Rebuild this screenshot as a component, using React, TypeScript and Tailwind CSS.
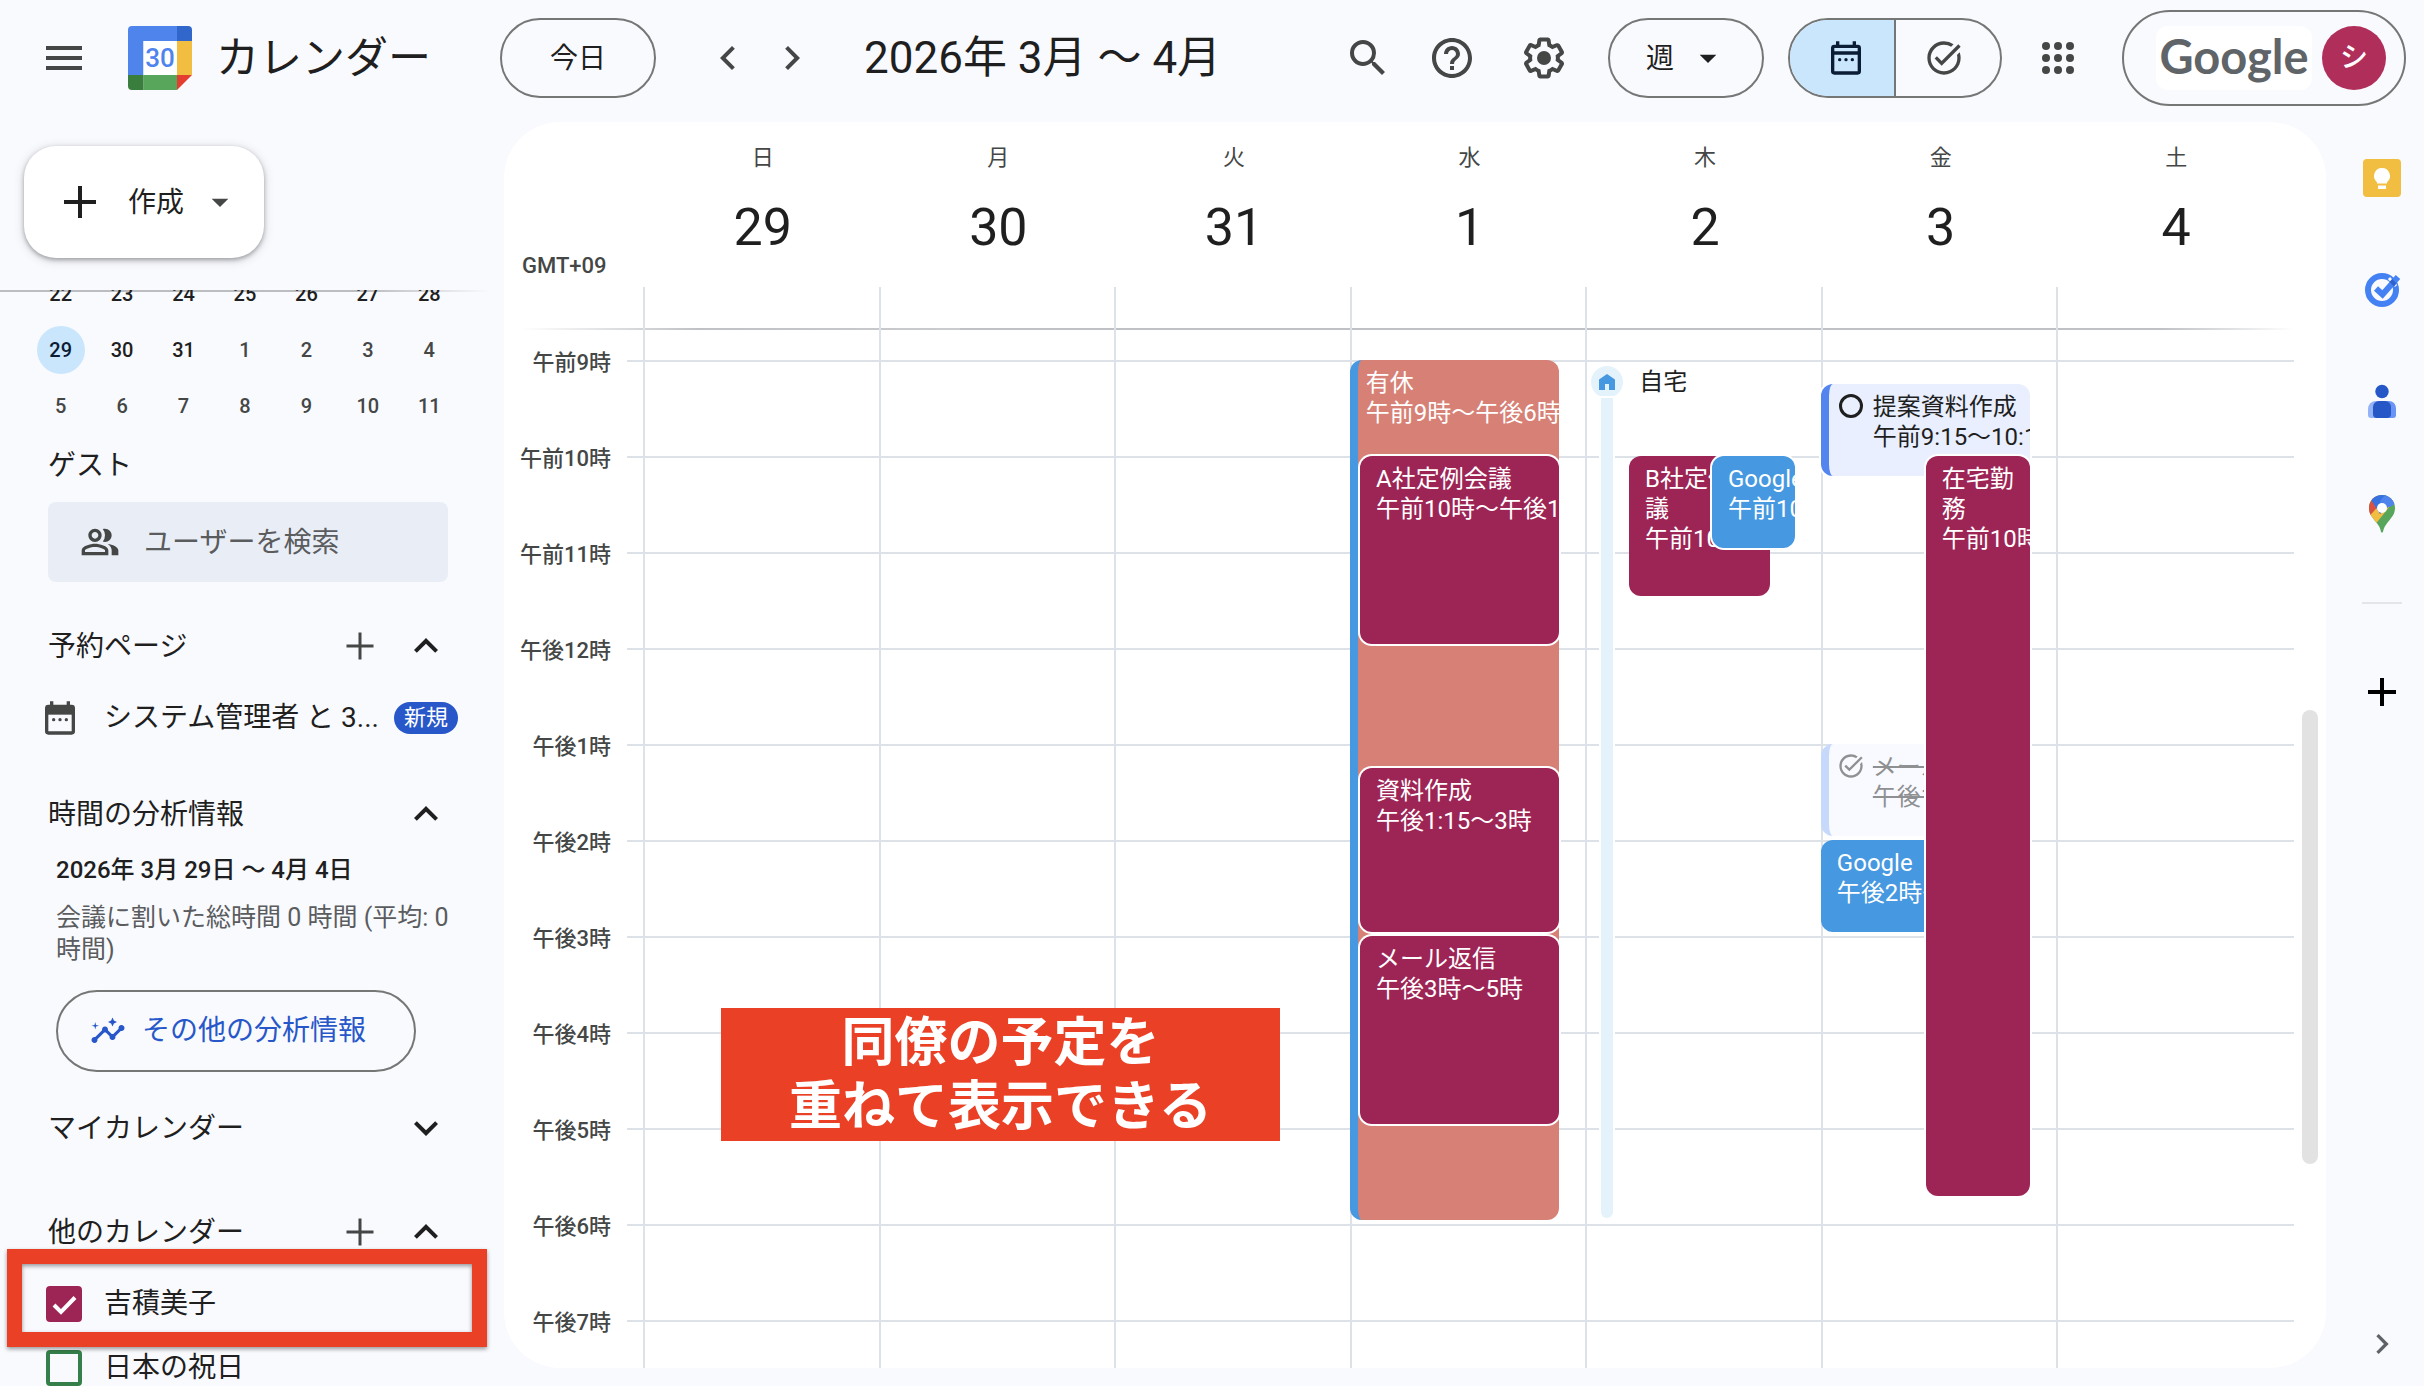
import type { ReactNode } from "react";
import {
  MdAdd,
  MdArrowDropDown,
  MdChevronLeft,
  MdChevronRight,
  MdExpandLess,
  MdExpandMore,
  MdHelpOutline,
  MdInsights,
  MdMenu,
  MdOutlinePeopleAlt,
  MdSearch,
  MdTaskAlt,
} from "react-icons/md";

const HOUR_HEIGHT = 96;
const FIRST_HOUR = 9;

const days = [
  { label: "日", date: 29 },
  { label: "月", date: 30 },
  { label: "火", date: 31 },
  { label: "水", date: 1 },
  { label: "木", date: 2 },
  { label: "金", date: 3 },
  { label: "土", date: 4 },
];

const hours = [
  "午前9時",
  "午前10時",
  "午前11時",
  "午後12時",
  "午後1時",
  "午後2時",
  "午後3時",
  "午後4時",
  "午後5時",
  "午後6時",
  "午後7時",
];

type Kind = "leave" | "berry" | "blue" | "task" | "done";

type CalEvent = {
  day: number;
  title: string;
  time: string;
  start: number;
  length: number;
  left: number;
  width: number;
  kind: Kind;
  ring?: boolean;
};

const events: CalEvent[] = [
  { day: 3, title: "有休", time: "午前9時～午後6時", start: 9, length: 9, left: 0, width: 88.7, kind: "leave" },
  { day: 3, title: "A社定例会議", time: "午前10時～午後12時", start: 10, length: 2, left: 4.4, width: 84.3, kind: "berry", ring: true },
  { day: 3, title: "資料作成", time: "午後1:15～3時", start: 13.25, length: 1.75, left: 4.4, width: 84.3, kind: "berry", ring: true },
  { day: 3, title: "メール返信", time: "午後3時～5時", start: 15, length: 2, left: 4.4, width: 84.3, kind: "berry", ring: true },
  { day: 4, title: "B社定例会議", time: "午前10時～11:30", start: 10, length: 1.5, left: 18.6, width: 60, kind: "berry" },
  { day: 4, title: "Google", time: "午前10時～11時", start: 10, length: 1, left: 53.8, width: 35.3, kind: "blue", ring: true },
  { day: 5, title: "提案資料作成", time: "午前9:15～10:15", start: 9.25, length: 1, left: 0, width: 88.7, kind: "task", ring: true },
  { day: 5, title: "メール返信", time: "午後1時～2時", start: 13, length: 1, left: 0, width: 60, kind: "done" },
  { day: 5, title: "Google", time: "午後2時～3時", start: 14, length: 1, left: 0, width: 60, kind: "blue" },
  { day: 5, title: "在宅勤務", time: "午前10時～午後5:45", start: 10, length: 7.75, left: 44.5, width: 44.2, kind: "berry", ring: true },
];

const kindClass: Record<Kind, string> = {
  leave: "bg-[#d78176] text-white border-l-8 border-[#4698e0] pl-2",
  berry: "bg-[#9d2556] text-white pl-4",
  blue: "bg-[#4698e0] text-white pl-4",
  task: "bg-[#e9effe] text-[#1f1f1f] border-l-8 border-[#5484ed] pl-2",
  done: "bg-[#f9faff] text-[#8e9092] border-l-8 border-[#c7d9fb] pl-2",
};

function EventBlock({ event }: { event: CalEvent }) {
  const isTask = event.kind === "task" || event.kind === "done";
  return (
    <article
      className={`absolute flex items-start gap-2 overflow-hidden rounded-xl pt-2 text-2xl leading-[30px] ${kindClass[event.kind]} ${event.ring ? "ring-2 ring-white" : ""}`}
      style={{
        top: (event.start - FIRST_HOUR) * HOUR_HEIGHT,
        height: event.length * HOUR_HEIGHT - 4,
        left: `${event.left}%`,
        width: `${event.width}%`,
      }}
    >
      {event.kind === "task" && (
        <svg viewBox="0 0 28 28" className="size-7 shrink-0" aria-hidden="true">
          <circle cx="14" cy="14" r="10.5" fill="none" stroke="currentColor" strokeWidth="3" />
        </svg>
      )}
      {event.kind === "done" && <MdTaskAlt className="size-7 shrink-0" aria-hidden="true" />}
      <div className={`min-w-0 ${isTask ? "whitespace-nowrap" : ""} ${event.kind === "done" ? "line-through" : ""}`}>
        <h3>{event.title}</h3>
        <p className="whitespace-nowrap">{event.time}</p>
      </div>
    </article>
  );
}

function CalendarLogo() {
  return (
    <svg viewBox="0 0 64 64" className="size-16 shrink-0" aria-hidden="true">
      <path d="M4 0h45v15H15.5v34H0V4a4 4 0 0 1 4-4z" fill="#5084ed" />
      <path d="M49 0h11a4 4 0 0 1 4 4v11H49z" fill="#3167ca" />
      <path d="M49 15h15v34H49z" fill="#f2be42" />
      <path d="M15.500 49H49v15H15.500z" fill="#58a55c" />
      <path d="M0 49h15.500v15H4a4 4 0 0 1-4-4z" fill="#3a7e3e" />
      <path d="M49 49h15L49 64z" fill="#e33e2f" />
      <path d="M15.500 15H49v34H15.500z" fill="#fff" />
      <text x="32" y="41" textAnchor="middle" fontSize="26" fontWeight="500" fill="#4f84ee">
        30
      </text>
    </svg>
  );
}

function GearIcon() {
  return (
    <svg viewBox="0 0 24 24" className="size-12" fill="currentColor" aria-hidden="true">
      <path d="M13.850 22.250h-3.700c-.74 0-1.360-.54-1.450-1.270l-.27-1.890c-.27-.14-.53-.29-.79-.46l-1.800.72c-.7.26-1.470-.03-1.810-.65L2.200 15.530c-.35-.66-.2-1.440.36-1.880l1.530-1.190c-.01-.15-.02-.3-.02-.46 0-.15.01-.31.02-.46l-1.520-1.190c-.59-.45-.74-1.260-.37-1.880l1.850-3.190c.34-.62 1.110-.9 1.790-.63l1.810.73c.26-.17.52-.32.78-.46l.27-1.910c.09-.7.71-1.250 1.440-1.250h3.700c.74 0 1.360.54 1.450 1.270l.27 1.890c.27.14.53.29.79.46l1.800-.72c.71-.26 1.480.03 1.820.65l1.840 3.180c.36.66.2 1.440-.36 1.880l-1.520 1.190c.01.15.02.3.02.46s-.01.31-.02.46l1.520 1.190c.56.45.72 1.230.37 1.860l-1.860 3.220c-.34.62-1.110.9-1.800.63l-1.800-.72c-.26.17-.52.32-.78.46l-.27 1.910c-.1.68-.72 1.220-1.460 1.220zm-3.230-2h2.760l.37-2.550.53-.22c.44-.18.88-.44 1.340-.78l.45-.34 2.380.96 1.380-2.400-2.030-1.580.07-.56c.03-.26.06-.51.06-.78s-.03-.53-.06-.78l-.07-.56 2.030-1.580-1.390-2.400-2.390.96-.45-.35c-.42-.32-.87-.58-1.330-.77l-.52-.22-.37-2.550h-2.760l-.37 2.550-.53.21c-.44.19-.88.44-1.340.79l-.45.33-2.380-.95-1.390 2.390 2.030 1.580-.07.56a7 7 0 0 0-.06.79c0 .26.02.53.06.78l.07.56-2.030 1.580 1.380 2.400 2.390-.96.45.35c.43.33.86.58 1.330.77l.53.22.38 2.550z" />
      <circle cx="12" cy="12" r="3.500" />
    </svg>
  );
}

function DayViewIcon({ filledHeader }: { filledHeader?: boolean }) {
  return (
    <svg viewBox="0 0 24 24" className="size-10 shrink-0" aria-hidden="true">
      <rect x="4" y="5" width="16" height="16" rx="1" fill="none" stroke="currentColor" strokeWidth="2" />
      <path d="M6 2h2v3H6zM16 2h2v3h-2z" fill="currentColor" />
      {filledHeader ? (
        <path d="M4 5h16v5H4z" fill="currentColor" />
      ) : (
        <path d="M4 8h16v2H4z" fill="currentColor" />
      )}
      <g fill="currentColor">
        <circle cx="8.200" cy="13" r="1" />
        <circle cx="12" cy="13" r="1" />
        <circle cx="15.800" cy="13" r="1" />
      </g>
    </svg>
  );
}

function AppsIcon() {
  return (
    <svg viewBox="0 0 24 24" className="size-12" fill="currentColor" aria-hidden="true">
      {[6, 12, 18].map((y) => [6, 12, 18].map((x) => <circle key={`${x}-${y}`} cx={x} cy={y} r="2" />))}
    </svg>
  );
}

function KeepIcon() {
  return (
    <svg viewBox="0 0 40 40" className="size-10" aria-hidden="true">
      <rect x="1" y="1" width="38" height="38" rx="4" fill="#f2be42" />
      <path d="M20 10a8 8 0 0 0-5 14.200V25.500h10v-1.300A8 8 0 0 0 20 10z" fill="#fff" />
      <path d="M16 27.500h8V31h-8z" fill="#fff" />
    </svg>
  );
}

function TasksIcon() {
  return (
    <svg viewBox="0 0 40 40" className="size-10" aria-hidden="true">
      <circle cx="20" cy="20" r="14" fill="none" stroke="#4482f4" strokeWidth="6" />
      <path d="M27 8l7 8" stroke="#f9fafe" strokeWidth="3" />
      <path d="M14 18.500l6.500 6L36 7" fill="none" stroke="#4482f4" strokeWidth="6" />
      <path d="M27.500 12l4.500 4.500 2.500-3-4.200-4.500z" fill="#2d62cf" />
    </svg>
  );
}

function ContactsIcon() {
  return (
    <svg viewBox="0 0 40 40" className="size-10" aria-hidden="true">
      <circle cx="20" cy="9.500" r="6.700" fill="#2557c6" />
      <path d="M14 19h13a7 7 0 0 1 7 7v7a3 3 0 0 1-3 3H14z" fill="#6b95f5" />
      <path d="M14 19h5v17H9a3 3 0 0 1-3-3v-6a8 8 0 0 1 8-8z" fill="#93b2f8" />
      <path d="M17 19h6a6 6 0 0 1 6 6v7a4 4 0 0 1-4 4H15a4 4 0 0 1-4-4v-7a6 6 0 0 1 6-6z" fill="#2557c6" />
    </svg>
  );
}

function MapsIcon() {
  return (
    <svg viewBox="0 0 40 40" className="size-10" aria-hidden="true">
      <defs>
        <clipPath id="pin">
          <path d="M20 1C12.500 1 7 6.800 7 14c0 7 4.500 10.500 8.500 16 2.500 3.500 3 5.500 3.400 7.500.3 1.500 1.900 1.500 2.200 0 .4-2 .9-4 3.400-7.500C28.500 24.500 33 21 33 14 33 6.800 27.500 1 20 1z" />
        </clipPath>
      </defs>
      <g clipPath="url(#pin)">
        <path d="M0 0h40v40H0z" fill="#58a55c" />
        <path d="M2 26L20 6l8 6L12 32z" fill="#f2be42" />
        <path d="M0 0h12l8 8-12 13.500L0 22z" fill="#d95140" />
        <path d="M8 4L20-2l12 10-14 12z" fill="#3871e0" />
        <path d="M24 0h12v8l-8 5-8-1-2-5z" fill="#5084ed" />
      </g>
      <circle cx="20" cy="14" r="5" fill="#fff" />
    </svg>
  );
}

function IconButton({ label, children, className = "" }: { label: string; children: ReactNode; className?: string }) {
  return (
    <button type="button" aria-label={label} className={`flex shrink-0 items-center justify-center ${className}`}>
      {children}
    </button>
  );
}

function Header() {
  return (
    <header className="mb-1.5 flex h-29 shrink-0 items-center pr-4.5 text-[#444746]">
      <div className="flex w-[500px] shrink-0 items-center pl-10">
        <IconButton label="メインメニュー" className="mr-10">
          <MdMenu className="size-12" />
        </IconButton>
        <a href="#calendar" className="flex items-center gap-6 text-[43px] leading-none text-[#1f1f1f]">
          <CalendarLogo />
          カレンダー
        </a>
      </div>
      <button
        type="button"
        className="h-20 w-39 shrink-0 rounded-full border-2 border-[#747775] pt-0.5 text-[28px] text-[#1f1f1f]"
      >
        今日
      </button>
      <div className="mx-12 flex gap-4">
        <IconButton label="前の週">
          <MdChevronLeft className="size-12" />
        </IconButton>
        <IconButton label="次の週">
          <MdChevronRight className="size-12" />
        </IconButton>
      </div>
      <h1 className="whitespace-nowrap text-[44px] leading-none text-[#1f1f1f]">2026年 3月 ～ 4月</h1>

      <div className="ml-auto flex items-center">
        <IconButton label="検索" className="mr-9">
          <MdSearch className="size-12" />
        </IconButton>
        <IconButton label="サポート" className="mr-11">
          <MdHelpOutline className="size-12" />
        </IconButton>
        <IconButton label="設定" className="mr-10">
          <GearIcon />
        </IconButton>
        <div className="relative mr-6 h-20 w-39 text-[#1f1f1f]">
          <select
            aria-label="表示形式"
            className="size-full appearance-none rounded-full border-2 border-[#747775] bg-transparent pl-9 pt-0.5 text-[28px]"
          >
            <option>週</option>
            <option>日</option>
            <option>月</option>
          </select>
          <MdArrowDropDown className="pointer-events-none absolute right-9 top-5 size-10" aria-hidden="true" />
        </div>
        <div className="mr-8 flex h-20 overflow-hidden rounded-full border-2 border-[#747775]">
          <IconButton
            label="カレンダーに切り替え"
            className="w-[106px] border-r-2 border-[#747775] bg-[#c9e6fd] pl-2 text-[#0b1d35]"
          >
            <DayViewIcon />
          </IconButton>
          <IconButton label="ToDo リストに切り替え" className="w-26 pr-2">
            <MdTaskAlt className="size-10" />
          </IconButton>
        </div>
        <IconButton label="Google アプリ" className="mr-10">
          <AppsIcon />
        </IconButton>
        <button
          type="button"
          aria-label="Google アカウント"
          className="flex h-24 w-71 items-center justify-end gap-2.5 rounded-full border-2 border-[#747775] pr-4.5"
        >
          <span className="flex h-16 w-39 items-center justify-center rounded-xl bg-white pb-1 font-[family-name:Lato] text-[47px] font-bold leading-none text-[#5f6469]">
            Google
          </span>
          <span className="flex size-16 items-center justify-center rounded-full bg-[#b02e5a] text-[28px] font-medium text-white">
            シ
          </span>
        </button>
      </div>
    </header>
  );
}

const miniWeeks = [
  [22, 23, 24, 25, 26, 27, 28],
  [29, 30, 31, 1, 2, 3, 4],
  [5, 6, 7, 8, 9, 10, 11],
];

function MiniCalendar() {
  return (
    <table className="-mt-6 ml-[30px] w-[430px] table-fixed text-center text-xl font-medium">
      <tbody>
        {miniWeeks.map((week, row) => (
          <tr key={row} className="h-14">
            {week.map((date, col) => {
              const current = row === 0 || (row === 1 && col < 3);
              const selected = row === 1 && col === 0;
              return (
                <td key={date} className="p-0">
                  <button
                    type="button"
                    className={`size-12 rounded-full align-middle ${selected ? "bg-[#c9e6fd] text-[#0b1d35]" : current ? "text-[#1f1f1f]" : "text-[#444746]"}`}
                  >
                    {date}
                  </button>
                </td>
              );
            })}
          </tr>
        ))}
      </tbody>
    </table>
  );
}

function SectionHeader({
  title,
  canAdd,
  open,
  className,
}: {
  title: string;
  canAdd?: boolean;
  open: boolean;
  className: string;
}) {
  return (
    <div className={`flex h-12 items-center pl-12 ${className}`}>
      <h2 className="flex-1 pt-0.5 text-[28px] leading-10">{title}</h2>
      {canAdd && (
        <IconButton label={`${title}を追加`} className="mr-11 text-[#444746]">
          <svg viewBox="0 0 28 28" className="size-7" aria-hidden="true">
            <path d="M14 0.500v27M0.500 14h27" stroke="currentColor" strokeWidth="3" />
          </svg>
        </IconButton>
      )}
      <IconButton label={open ? `${title}を閉じる` : `${title}を開く`} className="mr-[54px] -ml-4">
        {open ? <MdExpandLess className="size-12" /> : <MdExpandMore className="size-12" />}
      </IconButton>
    </div>
  );
}

function Sidebar() {
  return (
    <aside className="flex w-[504px] shrink-0 flex-col overflow-hidden pt-[24px]">
      <button
        type="button"
        className="ml-6 flex h-28 w-60 shrink-0 items-center rounded-[32px] bg-white pl-10 text-[28px] shadow-[0_2px_4px_rgba(60,64,67,0.4),0_2px_8px_2px_rgba(60,64,67,0.15)]"
      >
        <svg viewBox="0 0 32 32" className="mr-8 size-8" aria-hidden="true">
          <path d="M16 0v32M0 16h32" stroke="currentColor" strokeWidth="4" />
        </svg>
        <span className="pt-0.5">作成</span>
        <MdArrowDropDown className="ml-4 size-10 text-[#444746]" aria-hidden="true" />
      </button>
      <div className="mt-8 h-0.5 w-[490px] shrink-0 bg-linear-to-r from-[#bcbdc1] from-75% to-transparent" />

      <div className="-mt-0.5 flex min-h-0 flex-1 flex-col overflow-hidden">
        <MiniCalendar />
        <label htmlFor="guest-search" className="ml-12 mt-3 text-[28px] leading-10">
          ゲスト
        </label>
        <div className="ml-12 mt-4 flex h-20 w-100 shrink-0 items-center gap-6 rounded-lg bg-[#e9eef6] pl-8 text-[#444746]">
          <MdOutlinePeopleAlt className="size-10 shrink-0" aria-hidden="true" />
          <input
            id="guest-search"
            placeholder="ユーザーを検索"
            className="h-full min-w-0 flex-1 bg-transparent text-[28px] outline-none placeholder:text-[#5a5c5e]"
          />
        </div>

        <SectionHeader title="予約ページ" canAdd open className="mt-10" />
        <div className="mt-6 flex h-12 shrink-0 items-center pl-10">
          <span className="text-[#444746]">
            <DayViewIcon filledHeader />
          </span>
          <a href="#booking" className="ml-6 w-[290px] truncate text-[28px] leading-10">
            システム管理者 と 3...
          </a>
          <span className="flex h-8 w-16 items-center justify-center rounded-full bg-[#2757c9] text-[22px] leading-none text-white">
            新規
          </span>
        </div>

        <SectionHeader title="時間の分析情報" open className="mt-12" />
        <p className="ml-14 mt-4 text-2xl font-medium leading-8">2026年 3月 29日 ～ 4月 4日</p>
        <p className="ml-14 mt-4 w-100 text-[25px] leading-8 text-[#5a5c5e]">
          会議に割いた総時間 0 時間 (平均: 0 時間)
        </p>
        <button
          type="button"
          className="ml-14 mt-6 flex h-[82px] w-90 shrink-0 items-center gap-4 rounded-full border-2 border-[#747775] pl-8 text-[28px] text-[#2757c9]"
        >
          <MdInsights className="size-9" aria-hidden="true" />
          その他の分析情報
        </button>

        <SectionHeader title="マイカレンダー" open={false} className="mt-8" />
        <SectionHeader title="他のカレンダー" canAdd open className="mt-14" />
        <ul className="relative mt-[30px] flex flex-col gap-7 pl-[46px] text-[28px] leading-9">
          <li>
            <label className="flex items-center gap-[22px]">
              <span className="relative size-9">
                <input
                  type="checkbox"
                  defaultChecked
                  className="block size-9 appearance-none rounded border-4 border-[#9d2556] checked:bg-[#9d2556]"
                />
                <svg viewBox="0 0 36 36" className="pointer-events-none absolute inset-0 size-9" aria-hidden="true">
                  <path d="M8 19l7 7 14-14.500" fill="none" stroke="#fff" strokeWidth="4" />
                </svg>
              </span>
              吉積美子
            </label>
          </li>
          <li>
            <label className="flex items-center gap-[22px]">
              <input type="checkbox" className="block size-9 appearance-none rounded border-4 border-[#35804a]" />
              日本の祝日
            </label>
          </li>
          <li
            aria-hidden="true"
            className="pointer-events-none absolute -top-[37px] left-[7px] h-[98px] w-[480px] border-[15px] border-[#ea4025] drop-shadow-[0_2px_2px_rgba(0,0,0,0.4)]"
          />
        </ul>
      </div>
    </aside>
  );
}

function WorkingLocation() {
  return (
    <div className="absolute left-1.5 top-1.5 flex h-[852px] items-start gap-4">
      <div className="flex h-full w-8 flex-col items-center">
        <span className="flex size-8 shrink-0 items-center justify-center rounded-full bg-[#e4f3fb]">
          <svg viewBox="0 0 16 16" className="size-4" aria-hidden="true">
            <path d="M0 5.500L8 0l8 5.500V16h-6v-6H6v6H0z" fill="#4698e0" />
          </svg>
        </span>
        <span className="w-3 flex-1 rounded-b-full bg-[#e4f3fb] ring-2 ring-white" />
      </div>
      <span className="text-2xl leading-8">自宅</span>
    </div>
  );
}

function WeekGrid() {
  return (
    <main className="relative mb-4.5 flex min-w-0 flex-1 flex-col overflow-hidden rounded-[56px] bg-white">
      <div className="flex h-[206px] shrink-0 pr-[34px]">
        <div className="flex w-[139px] shrink-0 items-end pb-[46px] pl-4.5 text-[22px] font-medium leading-8 text-[#444746]">
          GMT+09
        </div>
        <div className="grid flex-1 grid-cols-7">
          {days.map((day) => (
            <div key={day.date} className="flex flex-col text-center">
              <span className="mt-5 pl-1 text-[22px] leading-8 text-[#444746]">{day.label}</span>
              <span className="mt-[22px] pl-1 text-[52px] leading-16">{day.date}</span>
              <span className="mt-auto h-[41px] border-l-2 border-[#dde1e8]" />
            </div>
          ))}
        </div>
      </div>

      <div className="relative min-h-0 flex-1 overflow-hidden pt-8">
        <div className="absolute left-4 right-8 top-0 h-0.5 bg-linear-to-r from-transparent via-[#bfc1c4] via-10% to-transparent" />
        <div className="absolute left-1/4 right-8 top-0 h-0.5 bg-linear-to-r from-[#bfc1c4] from-90% to-transparent" />
        {hours.map((hour) => (
          <div key={hour} className="flex h-24 pr-8">
            <span className="-mt-[13px] h-8 w-[107px] shrink-0 whitespace-nowrap text-right text-[22px] font-medium leading-8 text-[#444746]">
              {hour}
            </span>
            <span className="ml-4 flex-1 border-t-2 border-[#dde1e8]" />
          </div>
        ))}
        <div className="absolute bottom-0 left-[139px] right-[34px] top-0 grid grid-cols-7">
          {days.map((day, index) => (
            <section
              key={day.date}
              aria-label={`${day.label} ${day.date}`}
              className="relative pt-8 shadow-[inset_2px_0_0_#dde1e8]"
            >
              <div className="relative">
                {index === 4 && <WorkingLocation />}
                {events
                  .filter((event) => event.day === index)
                  .map((event) => (
                    <EventBlock key={`${event.title}-${event.start}`} event={event} />
                  ))}
              </div>
            </section>
          ))}
        </div>
      </div>

      <div className="absolute right-2 top-[588px] h-[454px] w-4 rounded-full bg-[#e2e2e2]" />
      <p className="absolute left-[217px] top-[886px] flex h-[133px] w-[559px] flex-col justify-center bg-[#ea4025] text-center text-[53px] font-bold leading-16 text-white">
        <span>同僚の予定を</span>
        <span>重ねて表示できる</span>
      </p>
    </main>
  );
}

function SidePanel() {
  return (
    <nav aria-label="サイドパネル" className="flex w-[98px] shrink-0 flex-col items-center pl-3.5 pt-9">
      <div className="flex flex-col gap-18">
        <IconButton label="Keep">
          <KeepIcon />
        </IconButton>
        <IconButton label="ToDo リスト">
          <TasksIcon />
        </IconButton>
        <IconButton label="連絡先">
          <ContactsIcon />
        </IconButton>
        <IconButton label="マップ">
          <MapsIcon />
        </IconButton>
      </div>
      <hr className="mt-17 w-10 border-t-2 border-[#e3e5e9]" />
      <IconButton label="アドオンを取得" className="mt-16 text-black">
        <MdAdd className="size-12" />
      </IconButton>
      <IconButton label="サイドパネルを非表示" className="mb-[22px] mt-auto text-[#5f6368]">
        <MdChevronRight className="size-10" />
      </IconButton>
    </nav>
  );
}

export default function App() {
  return (
    <div
      lang="ja"
      className="flex h-screen flex-col overflow-hidden bg-[#f9fafe] font-[Roboto,'Noto_Sans_CJK_JP',sans-serif] text-[#1f1f1f]"
    >
      <Header />
      <div className="flex min-h-0 flex-1">
        <Sidebar />
        <WeekGrid />
        <SidePanel />
      </div>
    </div>
  );
}
